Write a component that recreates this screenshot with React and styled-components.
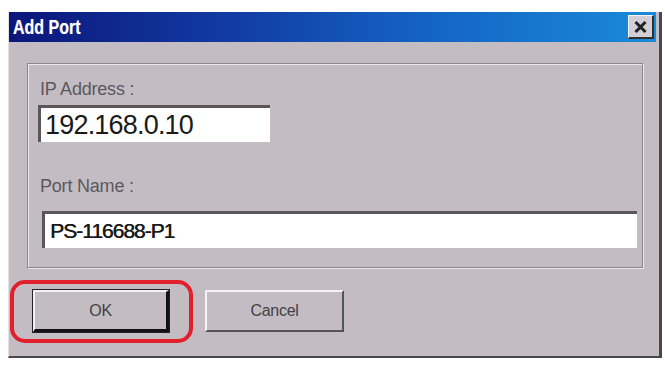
import React from "react";
import styled, { createGlobalStyle } from "styled-components";

const Global = createGlobalStyle`
  html, body {
    margin: 0;
    background: #ffffff;
  }
  body {
    font-family: "Liberation Sans", Arial, sans-serif;
  }
`;

const Dialog = styled.div`
  margin: 12px 0 0 8px;
  width: 654px;
  height: 346px;
  box-sizing: border-box;
  background: #c3bdc3;
  border-left: 1px solid #e4e0e4;
  border-right: 3px solid #4a464a;
  border-bottom: 2px solid #4a464a;
  padding-right: 3px;
  display: flex;
  flex-direction: column;
`;

const TitleBar = styled.div`
  height: 30px;
  flex-shrink: 0;
  background: linear-gradient(90deg, #0b167a 0%, #123ca4 35%, #1464c4 65%, #1a8ad8 100%);
  display: flex;
  align-items: center;
  justify-content: space-between;
  padding: 0 2px 0 4px;
`;

const Title = styled.span`
  display: inline-block;
  color: #ffffff;
  font-weight: bold;
  font-size: 20px;
  transform: scaleX(0.8);
  transform-origin: left center;
  text-shadow: 0 0 1px rgba(255, 255, 255, 0.4);
`;

const CloseButton = styled.div`
  width: 26px;
  height: 24px;
  box-sizing: border-box;
  background: #d2ced6;
  border-top: 1px solid #f4f4f4;
  border-left: 1px solid #f4f4f4;
  border-right: 2px solid #303030;
  border-bottom: 2px solid #303030;
  display: flex;
  align-items: center;
  justify-content: center;
`;

const Body = styled.div`
  flex: 1;
  padding: 21px 13px 0 18px;
  display: flex;
  flex-direction: column;
`;

const GroupBox = styled.div`
  height: 205px;
  box-sizing: border-box;
  border: 1px solid #8c868c;
  box-shadow: inset 1px 1px 0 #ece8ec, 1px 1px 0 #ece8ec;
  padding: 15px 9px 0 12px;
  display: flex;
  flex-direction: column;
`;

const Label = styled.div`
  font-size: 18px;
  line-height: 21px;
  color: #5c585c;
  letter-spacing: -0.2px;
  margin: ${(p) => p.$margin};
`;

const Field = styled.div`
  width: ${(p) => p.$width};
  height: 37px;
  box-sizing: border-box;
  background: #ffffff;
  border-top: 3px solid #5a565a;
  border-left: 3px solid #5a565a;
  display: flex;
  align-items: center;
  padding-left: ${(p) => p.$pad};
  margin: ${(p) => p.$margin};
  color: #1a1a1a;
  font-size: ${(p) => p.$size};
  letter-spacing: ${(p) => p.$spacing};
  text-shadow: ${(p) => (p.$heavy ? "0.5px 0 0 #1a1a1a" : "none")};
`;

const ButtonRow = styled.div`
  display: flex;
  gap: 36px;
  margin: 22px 0 0 6px;
`;

const ButtonWrap = styled.div`
  position: relative;
`;

const Button = styled.div`
  width: ${(p) => p.$width};
  height: 42px;
  box-sizing: border-box;
  background: #c3bdc3;
  border-top: 2px solid #f4f2f4;
  border-left: 2px solid #f4f2f4;
  border-right: ${(p) => (p.$default ? "3px solid #111" : "2px solid #555")};
  border-bottom: ${(p) => (p.$default ? "3px solid #111" : "2px solid #555")};
  outline: ${(p) => (p.$default ? "1px solid #222" : "none")};
  display: flex;
  align-items: center;
  justify-content: center;
  font-size: 16px;
  color: #444044;
  letter-spacing: -0.3px;
`;

const Highlight = styled.div`
  position: absolute;
  left: -23px;
  top: -10px;
  right: -24px;
  bottom: -11px;
  border: 4px solid #e2202c;
  border-radius: 15px;
  pointer-events: none;
`;

export default () => {
  return (
    <>
      <Global />
      <Dialog>
        <TitleBar>
          <Title>Add Port</Title>
          <CloseButton>
            <svg width="13" height="12" viewBox="0 0 13 12">
              <path d="M1.5 1 L11.5 11 M11.5 1 L1.5 11" stroke="#222" strokeWidth="3" />
            </svg>
          </CloseButton>
        </TitleBar>
        <Body>
          <GroupBox>
            <Label $margin="0 0 5px 0">IP Address :</Label>
            <Field $width="232px" $pad="4px" $size="27px" $spacing="-0.8px" $margin="0 0 0 -2px">
              192.168.0.10
            </Field>
            <Label $margin="34px 0 14px 0">Port Name :</Label>
            <Field $width="595px" $pad="5px" $size="21px" $spacing="-1px" $margin="0 0 0 2px" $heavy>
              PS-116688-P1
            </Field>
          </GroupBox>
          <ButtonRow>
            <ButtonWrap>
              <Button $width="136px" $default>
                OK
              </Button>
              <Highlight />
            </ButtonWrap>
            <ButtonWrap>
              <Button $width="139px">Cancel</Button>
            </ButtonWrap>
          </ButtonRow>
        </Body>
      </Dialog>
    </>
  );
};
